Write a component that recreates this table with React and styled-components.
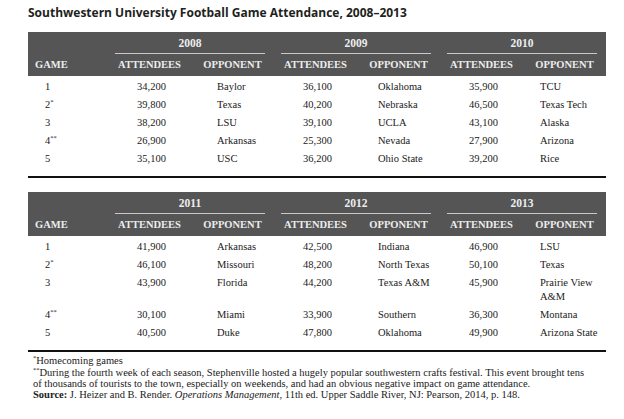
import styled, { createGlobalStyle } from 'styled-components';

const serif = '"Liberation Serif", "Times New Roman", Times, serif';

const GlobalStyle = createGlobalStyle`
  html, body {
    margin: 0;
    padding: 0;
    background: #fff;
  }
  body {
    font-family: ${serif};
    color: #1a1a1a;
  }
`;

const blocks = [
  {
    years: ['2008', '2009', '2010'],
    rows: [
      ['1', '', [['34,200', 'Baylor'], ['36,100', 'Oklahoma'], ['35,900', 'TCU']]],
      ['2', '*', [['39,800', 'Texas'], ['40,200', 'Nebraska'], ['46,500', 'Texas Tech']]],
      ['3', '', [['38,200', 'LSU'], ['39,100', 'UCLA'], ['43,100', 'Alaska']]],
      ['4', '**', [['26,900', 'Arkansas'], ['25,300', 'Nevada'], ['27,900', 'Arizona']]],
      ['5', '', [['35,100', 'USC'], ['36,200', 'Ohio State'], ['39,200', 'Rice']]],
    ],
  },
  {
    years: ['2011', '2012', '2013'],
    rows: [
      ['1', '', [['41,900', 'Arkansas'], ['42,500', 'Indiana'], ['46,900', 'LSU']]],
      ['2', '*', [['46,100', 'Missouri'], ['48,200', 'North Texas'], ['50,100', 'Texas']]],
      ['3', '', [['43,900', 'Florida'], ['44,200', 'Texas A&M'], ['45,900', 'Prairie View A&M']]],
      ['4', '**', [['30,100', 'Miami'], ['33,900', 'Southern'], ['36,300', 'Montana']]],
      ['5', '', [['40,500', 'Duke'], ['47,800', 'Oklahoma'], ['49,900', 'Arizona State']]],
    ],
  },
];

const insets = [26, 21, 17];

export default function App() {
  return (
    <Page>
      <GlobalStyle />
      <Title>Southwestern University Football Game Attendance, 2008–2013</Title>
      {blocks.map((block, i) => (
        <Table key={i} $first={i === 0}>
          <colgroup>
            <col style={{ width: 80 }} />
            {block.years.map((y) => [
              <col key={y + 'a'} style={{ width: 83 }} />,
              <col key={y + 'o'} style={{ width: 83 }} />,
            ])}
          </colgroup>
          <thead>
            <tr>
              <GameHead rowSpan={2}>GAME</GameHead>
              {block.years.map((y) => (
                <YearHead key={y} colSpan={2}>
                  <span>{y}</span>
                </YearHead>
              ))}
            </tr>
            <tr>
              {block.years.map((y) => [
                <ColHead key={y + 'a'}>ATTENDEES</ColHead>,
                <ColHead key={y + 'o'}>OPPONENT</ColHead>,
              ])}
            </tr>
          </thead>
          <tbody>
            {block.rows.map(([game, mark, cells]) => (
              <tr key={game}>
                <GameCell>
                  {game}
                  {mark && <Sup>{mark}</Sup>}
                </GameCell>
                {cells.map(([count, team], k) => [
                  <CountCell key={k + 'c'}>{count}</CountCell>,
                  <TeamCell key={k + 't'} $inset={insets[k]}>
                    {team}
                  </TeamCell>,
                ])}
              </tr>
            ))}
          </tbody>
        </Table>
      ))}
      <Notes>
        <Note>
          <Sup>*</Sup>Homecoming games
        </Note>
        <Note $tight>
          <Sup>**</Sup>During the fourth week of each season, Stephenville hosted a hugely popular
          southwestern crafts festival. This event brought tens
          <br />
          of thousands of tourists to the town, especially on weekends, and had an obvious negative
          impact on game attendance.
        </Note>
        <Note>
          <b>Source:</b> J. Heizer and B. Render. <i>Operations Management</i>, 11th ed. Upper
          Saddle River, NJ: Pearson, 2014, p. 148.
        </Note>
      </Notes>
    </Page>
  );
}

const Page = styled.div`
  padding: 6px 0 0 28px;
  width: 578px;
  font-family: ${serif};
`;

const Title = styled.h1`
  margin: 0 0 12px;
  font-family: "Open Sans", "Noto Sans", sans-serif;
  font-weight: 700;
  font-size: 12px;
  line-height: 14px;
  color: #231f20;
  white-space: nowrap;
`;

const Table = styled.table`
  width: 578px;
  table-layout: fixed;
  border-collapse: collapse;
  border-bottom: 2px solid #111;
  margin-top: ${({ $first }) => ($first ? 0 : 14)}px;
  font-family: ${serif};
  font-size: 10.5px;
  color: #1a1a1a;

  thead {
    background: #555;
    color: #ededed;
  }
  th {
    font-weight: 700;
    white-space: nowrap;
  }
  tbody tr:first-child td {
    padding-top: 4px;
  }
  tbody tr:last-child td {
    padding-bottom: 10px;
  }
`;

const GameHead = styled.th`
  text-align: left;
  vertical-align: bottom;
  padding: 0 0 4px 7px;
  line-height: 14px;
`;

const YearHead = styled.th`
  padding: 4px 9px 0 7px;
  font-size: 11.5px;
  span {
    display: block;
    line-height: 15px;
    padding-bottom: 2px;
    border-bottom: 1px solid #c8c8c8;
  }
`;

const ColHead = styled.th`
  text-align: center;
  padding: 4px 0;
  line-height: 14px;
`;

const Cell = styled.td`
  padding: 2px 0;
  line-height: 14px;
  vertical-align: top;
`;

const GameCell = styled(Cell)`
  padding-left: 17px;
`;

const CountCell = styled(Cell)`
  text-align: center;
  padding-left: 4px;
`;

const TeamCell = styled(Cell)`
  padding-left: ${({ $inset }) => $inset}px;
  padding-right: 4px;
`;

const Sup = styled.sup`
  font-size: 6.5px;
  line-height: 0;
  vertical-align: 4px;
`;

const Notes = styled.div`
  padding: 3px 0 0 5px;
  font-family: ${serif};
  font-size: 10.5px;
  color: #1a1a1a;
`;

const Note = styled.p`
  margin: 0 0 ${({ $tight }) => ($tight ? 0 : 2)}px;
  line-height: ${({ $tight }) => ($tight ? 10.5 : 11)}px;
  white-space: nowrap;
`;
